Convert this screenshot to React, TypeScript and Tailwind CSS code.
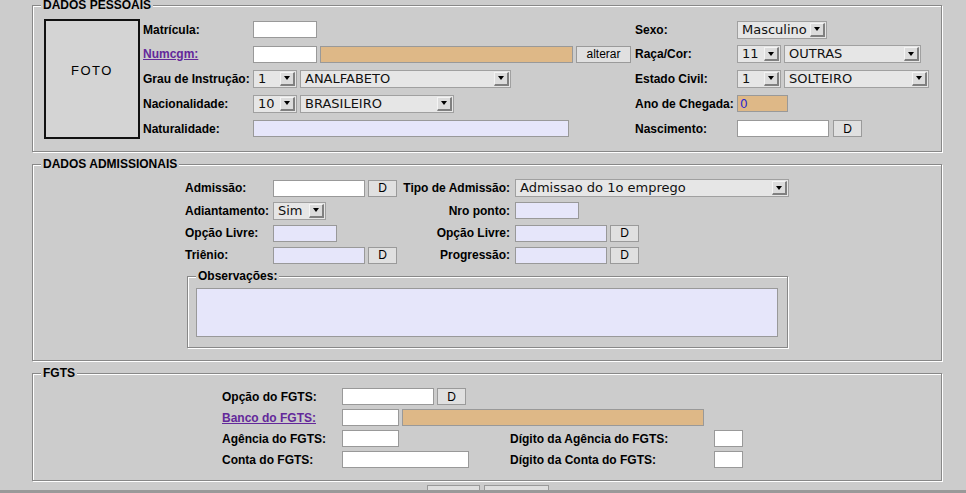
import React from "react";

const SEL_FONT = "font-['DejaVu_Sans',sans-serif] text-[13px] text-[#111]";

function FS({
  legend,
  className = "",
  children,
}: {
  legend: string;
  className?: string;
  children: React.ReactNode;
}) {
  return (
    <fieldset
      className={`border border-[#888] shadow-[1px_1px_0_#fff,inset_1px_1px_0_#fff] ${className}`}
    >
      <legend className="ml-[8px] px-[2px] bg-[#cccccc] text-[12px] leading-[11px] font-bold text-black">
        {legend}
      </legend>
      {children}
    </fieldset>
  );
}

function Lbl({ children, className = "" }: { children: React.ReactNode; className?: string }) {
  return (
    <div className={`text-[12px] font-bold text-black whitespace-nowrap ${className}`}>{children}</div>
  );
}

function LinkLbl({ children, className = "" }: { children: React.ReactNode; className?: string }) {
  return (
    <div className={`text-[12px] font-bold text-[#63289a] underline whitespace-nowrap ${className}`}>
      {children}
    </div>
  );
}

function Inp({ className = "", children }: { className?: string; children?: React.ReactNode }) {
  return (
    <div className={`h-[17px] border border-[#999] flex items-center pl-[2px] ${className}`}>{children}</div>
  );
}

function Btn({ className = "", children }: { className?: string; children: React.ReactNode }) {
  return (
    <div
      className={`h-[17px] border border-[#9a9a9a] bg-[#e0e0e0] flex items-center justify-center text-[12px] text-black ${className}`}
    >
      {children}
    </div>
  );
}

function Sel({ className = "", value }: { className?: string; value: string }) {
  return (
    <div className={`h-[18px] border border-[#a0a0a0] bg-[#e6e6e6] flex items-center ${className}`}>
      <span className={`flex-1 pl-[4px] leading-[16px] whitespace-nowrap overflow-hidden ${SEL_FONT}`}>
        {value}
      </span>
      <span className="w-[15px] h-[14px] mr-[1px] border-t border-l border-t-[#f4f4f4] border-l-[#f4f4f4] border-r-2 border-b-2 border-r-[#808080] border-b-[#808080] bg-[#dcdcdc] flex items-center justify-center">
        <span className="w-0 h-0 border-l-[3px] border-r-[3px] border-t-[4px] border-l-transparent border-r-transparent border-t-black" />
      </span>
    </div>
  );
}

export default function App() {
  return (
    <div className="h-[493px] w-[966px] bg-[#cccccc] flex flex-col overflow-hidden font-['Liberation_Sans',Arial,sans-serif]">
      <div className="h-[490px] overflow-hidden pl-[32px]">
        {/* DADOS PESSOAIS */}
        <FS legend="DADOS PESSOAIS" className="w-[910px] pb-[10px]">
          <div className="flex items-start pt-[6px] pl-[11px]">
            <div className="mt-[2px] w-[96px] h-[120px] border-2 border-[#111] bg-[#d4d4d4] flex items-center justify-center pb-[16px] text-[13px] tracking-[1.5px] text-black">
              FOTO
            </div>
            <div className="ml-[3px] w-[492px] flex flex-col">
              <div className="h-[25px] flex items-center">
                <Lbl className="w-[110px]">Matrícula:</Lbl>
                <Inp className="w-[64px] bg-white" />
              </div>
              <div className="h-[24px] flex items-center">
                <LinkLbl className="w-[110px]">Numcgm:</LinkLbl>
                <Inp className="w-[64px] bg-white" />
                <Inp className="ml-[3px] w-[253px] bg-[#deb887]" />
                <Btn className="ml-[3px] w-[55px] text-[11px]">alterar</Btn>
              </div>
              <div className="h-[25px] flex items-center">
                <Lbl className="w-[110px]">Grau de Instrução:</Lbl>
                <Sel className="w-[44px]" value="1" />
                <Sel className="ml-[3px] w-[211px]" value="ANALFABETO" />
              </div>
              <div className="h-[25px] flex items-center">
                <Lbl className="w-[110px]">Nacionalidade:</Lbl>
                <Sel className="w-[44px]" value="10" />
                <Sel className="ml-[3px] w-[154px]" value="BRASILEIRO" />
              </div>
              <div className="h-[25px] flex items-center">
                <Lbl className="w-[110px]">Naturalidade:</Lbl>
                <Inp className="w-[316px] bg-[#e6e6fa]" />
              </div>
            </div>
            <div className="flex flex-col">
              <div className="h-[25px] flex items-center">
                <Lbl className="w-[102px]">Sexo:</Lbl>
                <Sel className="w-[90px]" value="Masculino" />
              </div>
              <div className="h-[24px] flex items-center">
                <Lbl className="w-[102px]">Raça/Cor:</Lbl>
                <Sel className="w-[44px]" value="11" />
                <Sel className="ml-[3px] w-[137px]" value="OUTRAS" />
              </div>
              <div className="h-[25px] flex items-center">
                <Lbl className="w-[102px]">Estado Civil:</Lbl>
                <Sel className="w-[44px]" value="1" />
                <Sel className="ml-[3px] w-[145px]" value="SOLTEIRO" />
              </div>
              <div className="h-[25px] flex items-center">
                <Lbl className="w-[102px]">Ano de Chegada:</Lbl>
                <Inp className="w-[51px] bg-[#deb887]">
                  <span className="font-['DejaVu_Sans',sans-serif] text-[12px] text-[#2a2ad0] leading-[14px]">0</span>
                </Inp>
              </div>
              <div className="h-[25px] flex items-center">
                <Lbl className="w-[102px]">Nascimento:</Lbl>
                <Inp className="w-[92px] bg-white" />
                <Btn className="ml-[4px] w-[29px]">D</Btn>
              </div>
            </div>
          </div>
        </FS>

        {/* DADOS ADMISSIONAIS */}
        <FS legend="DADOS ADMISSIONAIS" className="w-[910px] mt-[7px] pb-[12px]">
          <div className="pt-[7px] ml-[152px] w-[604px] flex flex-col">
            <div className="h-[22px] flex items-center">
              <Lbl className="w-[88px]">Admissão:</Lbl>
              <div className="w-[127px] flex items-center">
                <Inp className="w-[92px] bg-white" />
                <Btn className="ml-[3px] w-[29px]">D</Btn>
              </div>
              <Lbl className="w-[115px] text-right pr-[5px]">Tipo de Admissão:</Lbl>
              <Sel className="w-[274px]" value="Admissao do 1o emprego" />
            </div>
            <div className="h-[23px] flex items-center">
              <Lbl className="w-[88px]">Adiantamento:</Lbl>
              <div className="w-[127px] flex items-center">
                <Sel className="w-[53px]" value="Sim" />
              </div>
              <Lbl className="w-[115px] text-right pr-[5px]">Nro ponto:</Lbl>
              <Inp className="w-[64px] bg-[#e6e6fa]" />
            </div>
            <div className="h-[22px] flex items-center">
              <Lbl className="w-[88px]">Opção Livre:</Lbl>
              <div className="w-[127px] flex items-center">
                <Inp className="w-[64px] bg-[#e6e6fa]" />
              </div>
              <Lbl className="w-[115px] text-right pr-[5px]">Opção Livre:</Lbl>
              <Inp className="w-[92px] bg-[#e6e6fa]" />
              <Btn className="ml-[3px] w-[29px]">D</Btn>
            </div>
            <div className="h-[22px] flex items-center">
              <Lbl className="w-[88px]">Triênio:</Lbl>
              <div className="w-[127px] flex items-center">
                <Inp className="w-[92px] bg-[#e6e6fa]" />
                <Btn className="ml-[3px] w-[29px]">D</Btn>
              </div>
              <Lbl className="w-[115px] text-right pr-[5px]">Progressão:</Lbl>
              <Inp className="w-[92px] bg-[#e6e6fa]" />
              <Btn className="ml-[3px] w-[29px]">D</Btn>
            </div>
            <FS legend="Observações:" className="mt-[5px] ml-[2px] w-[601px] pb-[10px]">
              <div className="mt-[6px] ml-[8px] w-[582px] h-[49px] border border-[#999] bg-[#e6e6fa]" />
            </FS>
          </div>
        </FS>

        {/* FGTS */}
        <FS legend="FGTS" className="w-[910px] mt-[7px] pb-[10px]">
          <div className="pt-[7px] ml-[189px] flex flex-col">
            <div className="h-[21px] flex items-center">
              <Lbl className="w-[120px]">Opção do FGTS:</Lbl>
              <Inp className="w-[92px] bg-white" />
              <Btn className="ml-[3px] w-[29px]">D</Btn>
            </div>
            <div className="h-[21px] flex items-center">
              <LinkLbl className="w-[120px]">Banco do FGTS:</LinkLbl>
              <Inp className="w-[57px] bg-white" />
              <Inp className="ml-[3px] w-[302px] bg-[#deb887]" />
            </div>
            <div className="h-[21px] flex items-center">
              <Lbl className="w-[120px]">Agência do FGTS:</Lbl>
              <div className="w-[168px] flex items-center">
                <Inp className="w-[57px] bg-white" />
              </div>
              <Lbl className="w-[204px]">Dígito da Agência do FGTS:</Lbl>
              <Inp className="w-[29px] bg-white" />
            </div>
            <div className="h-[21px] flex items-center">
              <Lbl className="w-[120px]">Conta do FGTS:</Lbl>
              <div className="w-[168px] flex items-center">
                <Inp className="w-[127px] bg-white" />
              </div>
              <Lbl className="w-[204px]">Dígito da Conta do FGTS:</Lbl>
              <Inp className="w-[29px] bg-white" />
            </div>
          </div>
        </FS>

        <div className="flex pt-[4px] pl-[395px] gap-[4px]">
          <div className="w-[53px] h-[20px] border border-[#999] bg-[#dedede]" />
          <div className="w-[65px] h-[20px] border border-[#999] bg-[#dedede]" />
        </div>
      </div>
      <div className="h-[3px] bg-[#999]" />
    </div>
  );
}
